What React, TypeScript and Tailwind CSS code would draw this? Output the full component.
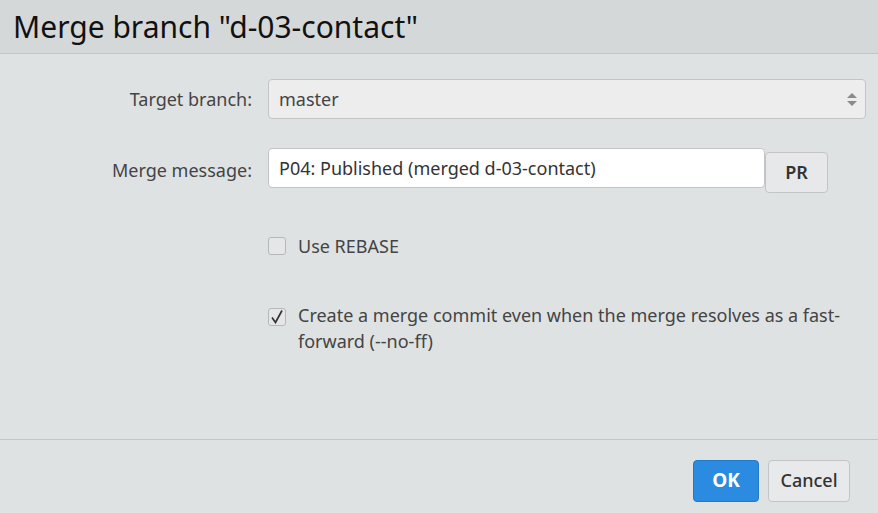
import React from 'react';

const font = { fontFamily: '"Source Sans Pro", "Noto Sans", Lato, sans-serif' };

const App = () => {
  return (
    <div className="w-[878px] h-[513px] flex flex-col bg-[#dfe2e3] text-[#333]" style={font}>
      <div className="h-[54px] shrink-0 bg-[#d5d8d9] border-b border-[#c3c6c8] flex items-center px-[13px]">
        <h1 className="text-[30px] leading-none text-[#111] font-normal">Merge branch "d-03-contact"</h1>
      </div>

      <div className="flex-1 flex flex-col pt-[25px]">
        <div className="flex items-center h-[40px]">
          <label className="w-[252px] text-right text-[18px] text-[#444]">Target branch:</label>
          <div className="ml-[16px] w-[598px] h-[40px] rounded-[4px] border border-[#c2c4c6] bg-[#ededed] flex items-center justify-between px-[10px]">
            <span className="text-[18px] text-[#444]">master</span>
            <svg width="10" height="16" viewBox="0 0 10 16" className="mr-[-2px]">
              <path d="M5 2 L10 7 L0 7 Z" fill="#8a8a8a" />
              <path d="M5 15 L10 10 L0 10 Z" fill="#8a8a8a" />
            </svg>
          </div>
        </div>

        <div className="flex items-center mt-[29px] h-[45px]">
          <label className="w-[252px] text-right text-[18px] text-[#444]">Merge message:</label>
          <div className="ml-[16px] w-[497px] h-[40px] self-start rounded-[4px] border border-[#c2c4c6] bg-white flex items-center px-[10px]">
            <span className="text-[18px] text-[#333]">P04: Published (merged d-03-contact)</span>
          </div>
          <button className="w-[63px] h-[41px] self-end mt-[3px] rounded-[4px] border border-[#c2c4c6] bg-[#e6e8e9] text-[18px] font-semibold text-[#333]">
            PR
          </button>
        </div>

        <div className="flex flex-col ml-[268px] mt-[40px]">
          <div className="flex items-start gap-[12px]">
            <div className="w-[18px] h-[18px] mt-[4px] rounded-[3px] border border-[#b5b8ba] bg-[#e4e6e7]" />
            <span className="text-[18px] leading-[26px] text-[#444]">Use REBASE</span>
          </div>
          <div className="flex items-start gap-[12px] mt-[43px]">
            <div className="w-[18px] h-[18px] mt-[6px] rounded-[3px] border border-[#b5b8ba] bg-[#e4e6e7] flex items-center justify-center">
              <svg width="14" height="14" viewBox="0 0 14 14">
                <path d="M2 7.5 L5.5 12.5 L12 0.5" fill="none" stroke="#333" strokeWidth="1.7" />
              </svg>
            </div>
            <span className="w-[560px] text-[18px] leading-[26px] text-[#444]">
              Create a merge commit even when the merge resolves as a fast-forward (--no-ff)
            </span>
          </div>
        </div>
      </div>

      <div className="h-[74px] shrink-0 border-t border-[#c3c6c8] flex items-center justify-end gap-[9px] pr-[28px] pt-[8px]">
        <button className="w-[66px] h-[42px] rounded-[4px] bg-[#2a8be0] border border-[#1f7acb] text-white text-[19px] font-bold">
          OK
        </button>
        <button className="w-[82px] h-[42px] rounded-[4px] bg-[#e7e9ea] border border-[#c2c4c6] text-[#333] text-[18px] font-medium">
          Cancel
        </button>
      </div>
    </div>
  );
};

export default App;
